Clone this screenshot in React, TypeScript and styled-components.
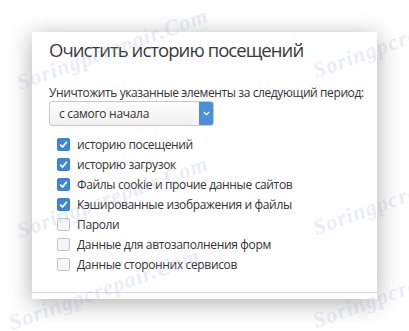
import styled, { createGlobalStyle } from 'styled-components';

const GlobalStyle = createGlobalStyle`
  html, body {
    margin: 0;
    padding: 0;
    background: #ffffff;
  }
  body {
    font-family: "Open Sans", "Liberation Sans", sans-serif;
    color: #333;
  }
`;

const Page = styled.div`
  position: relative;
  width: 409px;
  height: 331px;
  overflow: hidden;
  padding: 32px 0 0 32px;
  box-sizing: border-box;
`;

const Card = styled.div`
  width: 345px;
  height: 267px;
  background: #fff;
  box-shadow: 0 4px 22px rgba(0, 0, 0, 0.32);
  box-sizing: border-box;
  padding: 4px 0 0 17px;
  display: flex;
  flex-direction: column;
`;

const Title = styled.h1`
  margin: 0;
  font-size: 18.5px;
  font-weight: 400;
  letter-spacing: -0.95px;
  line-height: 27px;
  color: #3a3a3a;
`;

const Label = styled.div`
  margin-top: 22px;
  font-size: 12px;
  letter-spacing: -0.4px;
  line-height: 16px;
  color: #333;
`;

const Select = styled.div`
  width: 165px;
  height: 25px;
  box-sizing: border-box;
  border: 1px solid #c8c8c8;
  border-radius: 3px;
  background: linear-gradient(#fdfdfd, #f1f1f1);
  display: flex;
  align-items: stretch;
  overflow: hidden;
`;

const SelectText = styled.div`
  flex: 1;
  padding-left: 9px;
  font-size: 12px;
  letter-spacing: -0.3px;
  line-height: 23px;
  color: #333;
`;

const SelectArrow = styled.div`
  width: 14px;
  background: #4a8fdc;
  display: flex;
  align-items: center;
  justify-content: center;
`;

const List = styled.div`
  margin-top: 8px;
  padding-left: 8px;
  display: flex;
  flex-direction: column;
`;

const Row = styled.label`
  height: 20px;
  display: flex;
  align-items: center;
  gap: 7px;
  font-size: 12px;
  letter-spacing: -0.35px;
  color: #333;
`;

const Box = styled.span<{ $checked: boolean }>`
  width: 13px;
  height: 13px;
  box-sizing: border-box;
  border-radius: 2px;
  display: flex;
  align-items: center;
  justify-content: center;
  background: ${(p) => (p.$checked ? '#3e86d6' : '#f6f6f6')};
  border: 1px solid ${(p) => (p.$checked ? '#3a7fcc' : '#c4c4c4')};
`;

const Footer = styled.div`
  margin-top: auto;
  margin-left: -17px;
  height: 6px;
  border-top: 1px solid #d8d8d8;
`;

const Watermark = styled.span<{ $x: number; $y: number }>`
  position: absolute;
  left: ${(p) => p.$x}px;
  top: ${(p) => p.$y}px;
  font-family: "Liberation Serif", serif;
  font-style: italic;
  font-weight: 700;
  font-size: 22px;
  letter-spacing: 1px;
  color: rgba(150, 170, 220, 0.22);
  transform: rotate(-20deg);
  transform-origin: left bottom;
  white-space: nowrap;
  pointer-events: none;
`;

const items = [
  { text: 'историю посещений', checked: true },
  { text: 'историю загрузок', checked: true },
  { text: 'Файлы cookie и прочие данные сайтов', checked: true },
  { text: 'Кэшированные изображения и файлы', checked: true },
  { text: 'Пароли', checked: false },
  { text: 'Данные для автозаполнения форм', checked: false },
  { text: 'Данные сторонних сервисов', checked: false },
];

const Check = () => (
  <svg width="9" height="9" viewBox="0 0 9 9">
    <path d="M1.2 4.6 L3.6 7 L7.8 1.8" fill="none" stroke="#fff" strokeWidth="1.8" />
  </svg>
);

export default function App() {
  return (
    <Page>
      <GlobalStyle />
      <Card>
        <Title>Очистить историю посещений</Title>
        <Label>Уничтожить указанные элементы за следующий период:</Label>
        <Select>
          <SelectText>с самого начала</SelectText>
          <SelectArrow>
            <svg width="7" height="5" viewBox="0 0 7 5">
              <path d="M0.8 1 L3.5 3.7 L6.2 1" fill="none" stroke="#fff" strokeWidth="1.3" />
            </svg>
          </SelectArrow>
        </Select>
        <List>
          {items.map((it) => (
            <Row key={it.text}>
              <Box $checked={it.checked}>{it.checked && <Check />}</Box>
              {it.text}
            </Row>
          ))}
        </List>
        <Footer />
      </Card>
      <Watermark $x={22} $y={70}>Soringpcrepair.Com</Watermark>
      <Watermark $x={318} $y={58}>Soringpcrep</Watermark>
      <Watermark $x={22} $y={218}>Soringpcrepair.Com</Watermark>
      <Watermark $x={318} $y={215}>Soringpcrep</Watermark>
      <Watermark $x={14} $y={310}>Soringpcrepair.Com</Watermark>
      <Watermark $x={318} $y={308}>Soringpcrep</Watermark>
    </Page>
  );
}
